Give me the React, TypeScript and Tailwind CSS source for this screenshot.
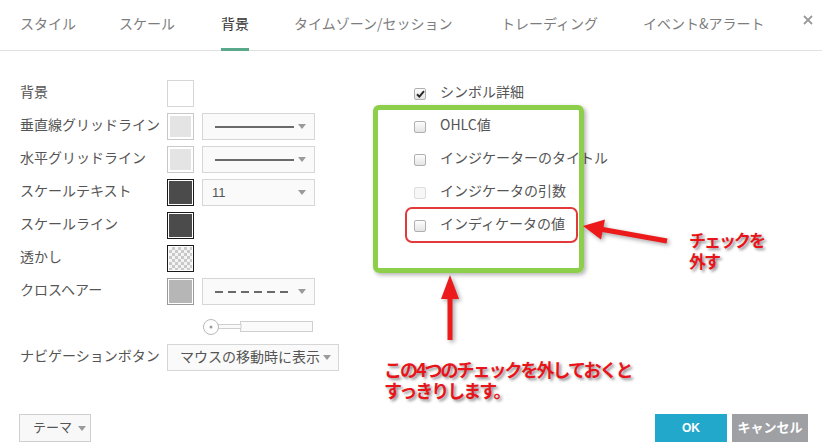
import React from "react";

function Caret() {
  return (
    <svg width="8" height="5" viewBox="0 0 8 5" className="shrink-0">
      <polygon points="0,0 8,0 4,5" fill="#9a9a9a" />
    </svg>
  );
}

function Swatch({ kind }: { kind: "white" | "light" | "dark" | "check" | "mid" }) {
  if (kind === "white")
    return <div className="w-[27px] h-[27px] border border-[#d6d6d6] bg-white shrink-0" />;
  if (kind === "light")
    return (
      <div className="w-[27px] h-[27px] border border-[#c9c9c9] p-[2px] bg-white shrink-0">
        <div className="w-full h-full bg-[#e4e4e4]" />
      </div>
    );
  if (kind === "mid")
    return (
      <div className="w-[27px] h-[27px] border border-[#9a9a9a] p-[1px] bg-white shrink-0">
        <div className="w-full h-full bg-[#b6b6b6]" />
      </div>
    );
  if (kind === "dark")
    return (
      <div className="w-[27px] h-[27px] border border-[#1a1a1a] p-[1px] bg-white shrink-0">
        <div className="w-full h-full bg-[#4b4b4b]" />
      </div>
    );
  return (
    <div className="w-[27px] h-[27px] border border-[#1a1a1a] p-[1px] bg-white shrink-0">
      <div className="w-full h-full [background-image:repeating-conic-gradient(#c9c9c9_0%_25%,#f4f4f4_0%_50%)] [background-size:6px_6px]" />
    </div>
  );
}

function LineSelect({ dashed }: { dashed?: boolean }) {
  return (
    <div className="ml-[8px] w-[113px] h-[27px] border border-[#d6d6d6] bg-[#fafafa] flex items-center pl-[12px]">
      <svg width="80" height="4" viewBox="0 0 80 4">
        {dashed ? (
          <line x1="0" y1="2" x2="76" y2="2" stroke="#6a6a6a" strokeWidth="2" strokeDasharray="8 5" />
        ) : (
          <line x1="0" y1="2" x2="79" y2="2" stroke="#6a6a6a" strokeWidth="2" />
        )}
      </svg>
      <div className="ml-[3px]">
        <Caret />
      </div>
    </div>
  );
}

function Row({ label, children }: { label: string; children?: React.ReactNode }) {
  return (
    <div className="h-[33px] flex items-center">
      <div className="w-[147px] text-[14px] text-[#555] leading-none pb-[5px]">{label}</div>
      {children}
    </div>
  );
}

function Check({ checked, disabled, label }: { checked?: boolean; disabled?: boolean; label: string }) {
  return (
    <div className="h-[33px] flex items-center">
      <div
        className={
          disabled
            ? "w-[12px] h-[12px] rounded-[2px] border border-[#dcdcdc] bg-[#f7f7f7] flex items-center justify-center"
            : "w-[12px] h-[12px] rounded-[2px] border border-[#b0b0b0] bg-gradient-to-b from-[#fdfdfd] to-[#e4e4e4] flex items-center justify-center"
        }
      >
        {checked && (
          <svg width="9" height="8" viewBox="0 0 9 8">
            <path d="M1 4.2 L3.4 6.6 L8 1.2" stroke="#2a2a2a" strokeWidth="2" fill="none" />
          </svg>
        )}
      </div>
      <div className="ml-[14px] text-[14px] text-[#555] leading-none pb-[5px]">{label}</div>
    </div>
  );
}

export default function App() {
  const tabs: { t: string; w: string; active?: boolean }[] = [
    { t: "スタイル", w: "w-[99px]" },
    { t: "スケール", w: "w-[102px]" },
    { t: "背景", w: "w-[73px]", active: true },
    { t: "タイムゾーン/セッション", w: "w-[207px]" },
    { t: "トレーディング", w: "w-[142px]" },
    { t: "イベント&アラート", w: "w-[150px]" },
  ];
  return (
    <div className="w-[822px] h-[447px] bg-white relative overflow-hidden flex flex-col font-['Noto_Sans_CJK_JP','Noto_Sans',sans-serif]">
      {/* header */}
      <div className="h-[51px] shrink-0 border-b border-[#e1e1e1] flex pl-[20px]">
        {tabs.map((tab) => (
          <div key={tab.t} className={tab.w + " h-full flex items-center shrink-0"}>
            <div className="relative h-full flex items-center pb-[4px]">
              <span
                className={
                  tab.active
                    ? "text-[14px] leading-none text-[#333] whitespace-nowrap"
                    : "text-[14px] leading-none text-[#7d7d7d] whitespace-nowrap"
                }
              >
                {tab.t}
              </span>
              {tab.active && <div className="absolute left-0 right-0 bottom-[-1px] h-[3px] bg-[#5aa88a]" />}
            </div>
          </div>
        ))}
        <div className="ml-auto pr-[9px] pt-[15px]">
          <svg width="10" height="10" viewBox="0 0 10 10">
            <path d="M1 1 L9 9 M9 1 L1 9" stroke="#9a9a9a" strokeWidth="1.8" />
          </svg>
        </div>
      </div>

      {/* body */}
      <div className="flex pt-[26px]">
        <div className="w-[394px] pl-[20px] shrink-0">
          <Row label="背景">
            <Swatch kind="white" />
          </Row>
          <Row label="垂直線グリッドライン">
            <Swatch kind="light" />
            <LineSelect />
          </Row>
          <Row label="水平グリッドライン">
            <Swatch kind="light" />
            <LineSelect />
          </Row>
          <Row label="スケールテキスト">
            <Swatch kind="dark" />
            <div className="ml-[8px] w-[113px] h-[27px] border border-[#d6d6d6] bg-[#fafafa] flex items-center pl-[9px] pr-[8px]">
              <span className="text-[13px] text-[#555] leading-none font-['Liberation_Sans',sans-serif]">11</span>
              <div className="ml-auto">
                <Caret />
              </div>
            </div>
          </Row>
          <Row label="スケールライン">
            <Swatch kind="dark" />
          </Row>
          <Row label="透かし">
            <Swatch kind="check" />
          </Row>
          <Row label="クロスヘアー">
            <Swatch kind="mid" />
            <LineSelect dashed />
          </Row>
          <Row label="">
            <div className="w-[27px]" />
            <div className="ml-[8px] mt-[4px]">
              <svg width="112" height="18" viewBox="0 0 112 18">
                <rect x="38.5" y="3.5" width="72" height="10" fill="#fafafa" stroke="#cfcfcf" />
                <rect x="16" y="6.5" width="23" height="4" fill="#fafafa" stroke="#cfcfcf" />
                <circle cx="9" cy="9" r="7.5" fill="#fff" stroke="#b9b9b9" />
                <circle cx="9" cy="9" r="1.5" fill="#9c9c9c" />
              </svg>
            </div>
          </Row>
          <Row label="ナビゲーションボタン">
            <div className="w-[172px] h-[27px] border border-[#d6d6d6] bg-[#fafafa] flex items-center pl-[12px]">
              <span className="text-[14px] text-[#555] leading-none whitespace-nowrap pb-[3px]">マウスの移動時に表示</span>
              <div className="ml-[3px]">
                <Caret />
              </div>
            </div>
          </Row>
        </div>
        <div className="pl-[20px] flex flex-col">
          <Check checked label="シンボル詳細" />
          <Check label="OHLC値" />
          <Check label="インジケーターのタイトル" />
          <Check disabled label="インジケータの引数" />
          <Check label="インディケータの値" />
        </div>
      </div>

      {/* footer */}
      <div className="mt-auto flex items-center pl-[19px] pr-[14px] pb-[5px]">
        <div className="w-[72px] h-[28px] border border-[#cfcfcf] bg-[#f8f8f8] flex items-center pl-[13px]">
          <span className="text-[13px] text-[#555] leading-none pb-[3px]">テーマ</span>
          <div className="ml-[6px]">
            <Caret />
          </div>
        </div>
        <div className="ml-auto flex gap-[5px]">
          <div className="w-[72px] h-[28px] bg-[#22a8cb] flex items-center justify-center text-white text-[12px] font-bold font-['Liberation_Sans',sans-serif]">
            OK
          </div>
          <div className="w-[76px] h-[28px] bg-[#9ea0a4] flex items-center justify-center text-white text-[13px] font-bold leading-none pb-[3px]">
            キャンセル
          </div>
        </div>
      </div>

      {/* annotations overlay */}
      <div className="absolute left-[373px] top-[105px] w-[211px] h-[168px] border-[5px] border-[#8dcf4b] rounded-[6px] shadow-[2px_2px_4px_rgba(0,0,0,0.3)] pointer-events-none" />
      <div className="absolute left-[405px] top-[207px] w-[173px] h-[36px] border-2 border-[#e23a3a] rounded-[7px] pointer-events-none" />
      <svg className="absolute inset-0 pointer-events-none [filter:drop-shadow(2px_2px_2px_rgba(0,0,0,0.35))]" width="822" height="447" viewBox="0 0 822 447">
        <line x1="667" y1="241" x2="600" y2="229" stroke="#ec1a1a" strokeWidth="5" />
        <polygon points="583,226 605,219.5 601,239.5" fill="#ec1a1a" />
        <line x1="450" y1="296" x2="450" y2="340" stroke="#ec1a1a" strokeWidth="5" />
        <polygon points="450,275 441,299 459,299" fill="#ec1a1a" />
      </svg>
      <div className="absolute left-[689px] top-[229px] font-bold text-[#e8141b] [text-shadow:2px_2px_3px_rgba(0,0,0,0.45)] pointer-events-none">
        <div className="text-[17px] leading-[21px] tracking-[-2px] whitespace-nowrap">チェックを</div>
        <div className="text-[17px] leading-[21px] tracking-[-2px] whitespace-nowrap">外す</div>
      </div>
      <div className="absolute left-[384px] top-[359px] font-bold text-[#e8141b] [text-shadow:2px_2px_3px_rgba(0,0,0,0.45)] pointer-events-none">
        <div className="text-[18px] leading-[21px] tracking-[-2px] whitespace-nowrap">この4つのチェックを外しておくと</div>
        <div className="text-[18px] leading-[21px] tracking-[-2px] whitespace-nowrap">すっきりします。</div>
      </div>
    </div>
  );
}
